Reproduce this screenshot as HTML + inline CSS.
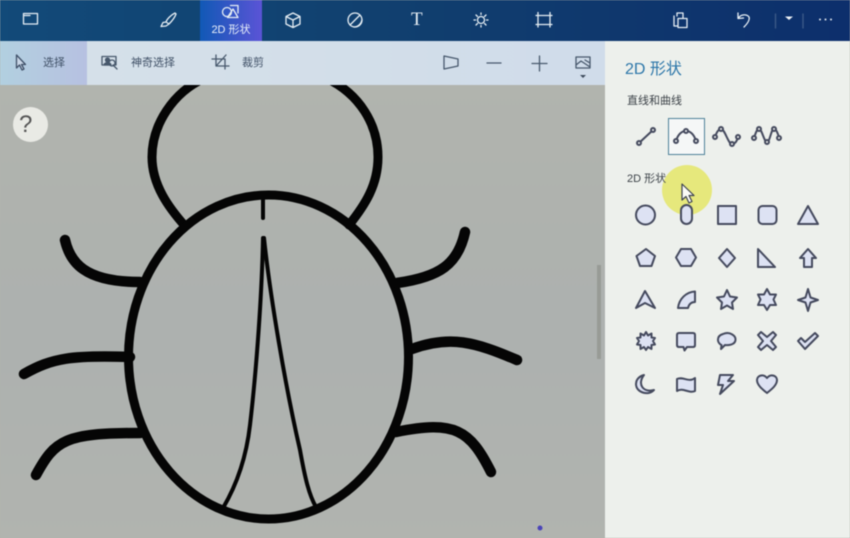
<!DOCTYPE html>
<html lang="zh-CN">
<head>
<meta charset="utf-8">
<title>2D 形状</title>
<style>
html,body{margin:0;padding:0;width:850px;height:538px;overflow:hidden;background:#b0b3ae}
body{position:relative;font-family:"Liberation Sans","Noto Sans CJK SC",sans-serif}
div,span{position:absolute;white-space:nowrap}
#w{left:0;top:0;width:850px;height:538px;overflow:hidden;filter:blur(.45px)}
#top{left:0;top:0;width:850px;height:41px;background:linear-gradient(90deg,#124a79 0%,#11406f 45%,#0d2f6c 100%)}
#tab{left:200px;top:0;width:62px;height:41px;background:linear-gradient(90deg,#1159b6,#5b54d6)}
#bar{left:0;top:41px;width:605px;height:44px;background:linear-gradient(90deg,#d6e1e9,#d0dcea)}
#sel{left:0;top:41px;width:87px;height:44px;background:linear-gradient(90deg,#b2d0e0,#b7c1e1)}
#panel{left:605px;top:41px;width:245px;height:497px;background:#edf0ec}
#canvas{left:0;top:85px;width:605px;height:453px;background:linear-gradient(180deg,#b1b4ae,#adb1af 55%,#b1b4af)}
#help{left:13px;top:107px;width:35px;height:35px;border-radius:50%;background:#e9eae5}
#q{left:19px;top:107px;color:#555;font-size:24px;line-height:35px}
#scroll{left:597px;top:265px;width:4px;height:94px;background:#989b96}
.t{font-size:11px;line-height:14px;color:#3f5066}
#hl{left:662px;top:165px;width:50px;height:50px;border-radius:50%;background:#e6e87c}
#box{left:668px;top:118px;width:35px;height:35px;background:#f5f7f7;border:1px solid #4f8199}
svg{position:absolute;left:0;top:0}
</style>
</head>
<body>
<div id="w">
<div id="canvas"></div>

<svg width="850" height="538" viewBox="0 0 850 538" fill="none" stroke-linecap="round" stroke-linejoin="round">
  <!-- bug -->
  <g stroke="#050505">
    <path stroke-width="9" d="M205 78C173 92 152 125 152 157C152 185 169 208 185 226"/>
    <path stroke-width="9" d="M326 78C360 94 378 125 378 157C378 185 365 205 349 225"/>
    <ellipse cx="268.500" cy="357" rx="140" ry="162" stroke-width="9"/>
    <path stroke-width="4" d="M263 197V218"/>
    <path stroke-width="4" d="M263 238C262 290 257 365 250 425C246 460 236 486 223 508"/>
    <path stroke-width="4" d="M264 238C270 295 285 385 300 450C305 478 309 495 316 507"/>
    <path stroke-width="10.500" d="M65 240C70 262 84 282 140 282"/>
    <path stroke-width="10.500" d="M465 232C458 264 440 277 397 283"/>
    <path stroke-width="10.500" d="M24 374C52 358 72 355 130 357"/>
    <path stroke-width="10.500" d="M517 360C475 342 450 335 412 349"/>
    <path stroke-width="10.500" d="M36 475C55 440 65 433 140 433"/>
    <path stroke-width="10.500" d="M491 472C470 430 455 420 396 432"/>
  </g>
  <circle cx="540" cy="528" r="2.500" fill="#4a44b8"/>
</svg>

<div id="top"></div>
<div id="tab"></div>
<div id="bar"></div>
<div id="sel"></div>
<div id="panel"></div>
<div id="hl"></div>
<div id="box"></div>
<div id="scroll"></div>

<svg width="850" height="538" viewBox="0 0 850 538" fill="none" stroke-linecap="round" stroke-linejoin="round">
  <!-- top bar icons -->
  <g stroke="#e6eef4" stroke-width="1.300">
    <path d="M23.500 13.500H37.500V24H23.500ZM23.500 15.500H30"/>
    <path d="M175 13C171 15 167 19 166 22L169 24C172 21 175 17 176 14ZM166 22L163 22.500L161 26.500L166 26L169 24"/>
    <circle cx="227" cy="12" r="4.500"/>
    <path d="M230.500 5.500H238V13M233 9L227.500 17.500H238Z"/>
    <path d="M293 13L300 16.500V24L293 27.500L286 24V16.500ZM286 16.500L293 20L300 16.500M293 20V27.500"/>
    <circle cx="355" cy="20" r="7"/><path d="M350 25L360 15M354 27C358 27 361 24 362 20"/>
    <circle cx="481" cy="20" r="3.500"/><path d="M481 13V14.500M481 25.500V27M474 20H475.500M486.500 20H488M476 15L477.500 16.500M484.500 23.500L486 25M476 25L477.500 23.500M484.500 16.500L486 15"/>
    <path d="M538 15.500H550V24.500H538ZM538 12.500V15.500M550 12.500V15.500M538 24.500V27M550 24.500V27M536 15.500H538M550 15.500H552M536 24.500H538M550 24.500H552"/>
    <path d="M674 16V26H678M678 18.500H687V27.500H678ZM677 16V13H683V18.500"/>
    <path d="M738 13L738 18.500L743.500 18M738.500 18C741 14 747 14 749 17C750 20 747 24 744 27"/>
    <path stroke="#3d5b88" d="M775.500 14V28M803 14V28"/>
  </g>
  <path d="M785 16.500H793L789 20Z" fill="#eef2f6"/>
  <g fill="#dfe6ee"><circle cx="820" cy="19.500" r="1"/><circle cx="825.500" cy="19.500" r="1"/><circle cx="831" cy="19.500" r="1"/></g>

  <!-- toolbar icons -->
  <g stroke="#47586c" stroke-width="1.300">
    <path d="M16.500 55V68L19.500 65L22 70L24 69L21.500 64.500H25.500Z" fill="#c9d6e6" stroke="#3f5068"/>
    <path d="M102 56.500H116V65H113M102 56.500V65H110"/>
    <circle cx="107.500" cy="60" r="2" fill="#47586c"/>
    <path d="M104 65C104 62 111 62 111 65Z" fill="#47586c"/>
    <circle cx="112" cy="63" r="3"/><path d="M114 66L117 69"/>
    <path d="M212 59H225V69M216 55V66H229M226 55L217 65"/>
    <path d="M444 56L458 59V66L444 69Z"/>
    <path d="M487 63H501M532 63.500H547M539.500 56V71"/>
    <path d="M576 57H590V68H576ZM576 65L581 61L590 67M585 60L590 63"/>
  </g>
  <path d="M580 75H586L583 78Z" fill="#3d4a5c"/>

  <!-- line tools -->
  <g stroke="#454a5e" stroke-width="2" fill="#edf0ec">
    <path d="M639 143L653 130" fill="none"/>
    <circle cx="639" cy="143" r="2"/><circle cx="653" cy="130" r="2"/>
    <path d="M676 141C678 134 682 131 686 131C690 131 694 134 696 141" fill="none"/>
    <circle cx="676" cy="141" r="2" fill="#f5f7f7"/><circle cx="686" cy="131" r="2" fill="#f5f7f7"/><circle cx="696" cy="141" r="2" fill="#f5f7f7"/>
    <path d="M715 137C717 131 719 129 721 129C725 129 728 144 732 144C735 144 737 141 738 137" fill="none"/>
    <circle cx="715" cy="137" r="2"/><circle cx="721" cy="129" r="2"/><circle cx="732" cy="144" r="2"/><circle cx="738" cy="137" r="2"/>
    <path d="M754 138C756 132 757 129 759 129C762 129 764 142 767 142C770 142 771 129 774 129C776 129 778 133 779 138" fill="none"/>
    <circle cx="754" cy="138" r="2"/><circle cx="759" cy="129" r="2"/><circle cx="767" cy="142" r="2"/><circle cx="774" cy="129" r="2"/><circle cx="779" cy="138" r="2"/>
  </g>

  <!-- shapes -->
  <g stroke="#454a5e" stroke-width="2" fill="#dde2f3">
    <circle cx="645.500" cy="215" r="9.500"/>
    <rect x="681" y="205" width="11" height="19" rx="5.500"/>
    <rect x="718" y="206" width="18" height="18"/>
    <rect x="758.500" y="206" width="18" height="18" rx="4"/>
    <path d="M808 206L818 224H798Z"/>
    <path d="M646 249L655 256L651.500 266H640L636.500 256Z"/>
    <path d="M681 249H691L696 257.500L691 266H681L676 257.500Z"/>
    <path d="M727 249L735 258L727 267L719 258Z"/>
    <path d="M758 249L775 267H758Z"/>
    <path d="M808 249L816 258H812V267H804V258H800Z"/>
    <path d="M645 291L655 308L645 303L636 308Z"/>
    <path d="M695 291.500V302C691 302 689 304 688 308H678C679 299 686 292 695 291.500Z"/>
    <path d="M727 290L730 296.500L737 297.500L732 302.500L733 309L727 305.500L721 309L722 302.500L717 297.500L724 296.500Z"/>
    <path d="M767 289L770 294.500L776 294.500L773.500 299.500L776 305L770 305L767 310L764 305L758 305L760.500 299.500L758 294.500L764 294.500Z"/>
    <path d="M808 289L810.500 297.500L818 300L810.500 302.500L808 311L805.500 302.500L798 300L805.500 297.500Z"/>
    <path d="M646 332L648 335.500L651.500 333.500L651.500 337.500L655 338L653 341L655 344.500L651.500 345L651.500 349L648 347L646 350L644 347L640.500 349L640.500 345L637 344.500L639 341L637 338L640.500 337.500L640.500 333.500L644 335.500Z"/>
    <path d="M679 333H693Q695 333 695 335V345Q695 347 693 347H687L684.500 350.500L683.500 347H679Q677 347 677 345V335Q677 333 679 333Z"/>
    <path d="M723 334C730 331 736 336 735.500 340C735 345 728 345.500 725 345L721 349L721.500 345C717 343 716 336 723 334Z"/>
    <path d="M761 332L767 337L773 332L776 335L771 341L776 347L773 350L767 345L761 350L758 347L763 341L758 335Z"/>
    <path d="M798 341L801 338L805 342L815 333L818 336L805 349Z"/>
    <path d="M644 375C637 384 643 393 654 390C649 396 636 393 636 384C636 379 640 376 644 375Z"/>
    <path d="M677 379C683 376 689 383 695 378V391C689 394 683 387 677 391Z"/>
    <path d="M720 375H733L728 381H734L720 394L723 385H718Z"/>
    <path d="M767 393C762 389 757 385 757 380C757 376 763 373 767 378C771 373 777 376 777 380C777 385 772 389 767 393Z"/>
  </g>

  <!-- mouse cursor -->
  <path d="M682 184V200L686 196.500L689 203L692 201.500L689 195.500H694Z" fill="#fbfbf6" stroke="#3d4250" stroke-width="1.200"/>
</svg>

<div id="help"></div>
<span id="q">?</span>

<span style="left:411px;top:8px;font-family:'Liberation Serif',serif;font-size:19px;line-height:24px;color:#e6eef4">T</span>
<div style="left:200px;top:23px;width:62px;text-align:center;font-size:11px;line-height:14px;color:#e9f0fa">2D 形状</div>

<div class="t" style="left:43px;top:56px">选择</div>
<div class="t" style="left:131px;top:56px">神奇选择</div>
<div class="t" style="left:242px;top:56px">裁剪</div>

<div style="left:625px;top:60px;font-size:16px;line-height:20px;color:#2c76a9">2D 形状</div>
<div class="t" style="left:627px;top:94px;color:#3c4248">直线和曲线</div>
<div class="t" style="left:627px;top:172px;color:#3c4248">2D 形状</div>
</div>
</body>
</html>
